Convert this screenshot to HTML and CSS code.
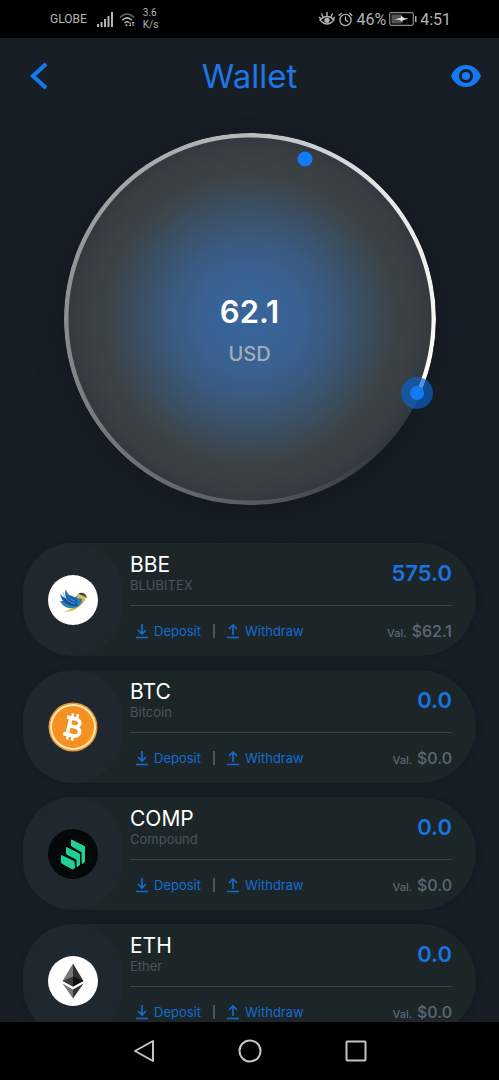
FILE: index.html
```html
<!DOCTYPE html>
<html lang="en">
<head>
<meta charset="utf-8">
<meta name="viewport" content="width=device-width, initial-scale=1">
<title>Wallet</title>
<link rel="stylesheet" href="styles.css">
</head>
<body>
<svg class="defs" aria-hidden="true">
  <symbol id="deposit" viewBox="0 0 14 16"><path d="M7 1v10M3 7l4 4 4-4M1 14.500h12" fill="none" stroke="currentColor" stroke-width="1.600"/></symbol>
  <symbol id="withdraw" viewBox="0 0 14 16"><path d="M7 12V2M3 6l4-4 4 4M1 14.500h12" fill="none" stroke="currentColor" stroke-width="1.600"/></symbol>
</svg>

<div class="status">
  <div class="status-group">
    <span class="carrier">GLOBE</span>
    <svg class="signal" viewBox="0 0 16 15" width="16" height="15" fill="#b4b4b4"><path d="M0 12h2v3H0zM3.500 10h2v5h-2zM7 7h2v8H7zM10.500 4h2v11h-2zM14 0h2v15h-2z"/></svg>
    <svg class="wifi" viewBox="0 0 16 15" width="16" height="15" fill="none" stroke="#b4b4b4" stroke-width="1.500"><path d="M1 5.500Q8-1.500 15 5.500" stroke="#666"/><path d="M3.200 8.300Q8 3.500 12.800 8.300M5.400 11Q8 8.500 10 10.700"/><circle cx="7.500" cy="13.300" r="1" fill="#b4b4b4" stroke="none"/><path d="M11.200 10v4m-1-1 1 1 1-1M14 14v-4m-1 1 1-1 1 1" stroke-width="1"/></svg>
    <span class="speed">3.6<br>K/s</span>
  </div>
  <div class="status-group status-right">
    <svg viewBox="0 0 16 14" width="16" height="14" fill="none" stroke="#b4b4b4" stroke-width="1.400"><path d="M1 8q7-7 14 0-7 8-14 0zM8 4V0M4 5 2.500 1.500M12 5l1.500-3.500M1.500 6.500 0 5M14.500 6.500 16 5"/><circle cx="8" cy="8.300" r="2.600" fill="#b4b4b4" stroke="none"/></svg>
    <svg class="alarm" viewBox="0 0 15 15" width="15" height="15" fill="none" stroke="#b4b4b4" stroke-width="1.300"><circle cx="7.500" cy="8" r="5.600"/><path d="M7.500 4.500V8.200l2.500 1.600M.7 3.800 3.700 1M14.300 3.800 11.300 1"/></svg>
    <span class="clock">46%</span>
    <svg class="battery" viewBox="0 0 28 14" width="28" height="14"><rect x=".7" y=".7" width="23.600" height="12.600" rx="1.500" fill="none" stroke="#8c8c8c" stroke-width="1.200"/><path d="M2.500 2.500h10v9h-10z" fill="#555"/><path d="M6 7.500 12 5.500v-2l3 2.500 4.500.5-6 2v2L11 8z" fill="#ddd"/><path d="M26 4h1.500v6H26z" fill="#aaa"/></svg>
    <span class="clock">4:51</span>
  </div>
</div>

<header class="header">
  <button class="icon-button" aria-label="Back"><svg viewBox="0 0 18 28" width="18" height="28"><path d="M16 2 3 14l13 12" fill="none" stroke="currentColor" stroke-width="4"/></svg></button>
  <h1 class="title">Wallet</h1>
  <button class="icon-button" aria-label="Show balance"><svg viewBox="0 0 30 22" width="30" height="22"><path d="M15 0C8 0 2.500 4.500 0 11c2.500 6.500 8 11 15 11s12.500-4.500 15-11C27.500 4.500 22 0 15 0z" fill="currentColor"/><circle cx="15" cy="11" r="5.600" fill="none" stroke="#171e26" stroke-width="3"/></svg></button>
</header>

<main class="content">
  <section class="balance">
    <div class="ring"></div>
    <span class="dot"></span>
    <span class="knob"></span>
    <strong class="total">62.1</strong>
    <span class="currency">USD</span>
  </section>

  <ul class="coins">
    <li class="coin">
      <div class="badge"><svg class="logo" viewBox="0 0 50 50"><circle cx="25" cy="25" r="25" fill="#fff"/><path d="M16 37c7 0 14-3 18-8 3-3 4-5 3-9l-5 1c0 8-7 13-16 16z" fill="#d6b944"/><path d="M12 26c3 6 8 8 14 7 6-1 9-5 8-12l-4-1c-3 3-10 6-18 6z" fill="#2a83ab"/><path d="M12 19c2 9 9 13 18 12-2-5-6-6-10-7-4-1-6-3-8-5z" fill="#1c4f9c"/><path d="M18 14c-3 8 2 14 11 15 2-4 0-6-3-7-5-2-7-3-8-8z" fill="#1b5fae"/><path d="M15 17c1 6 5 10 12 12M19 18c0 4 4 7 8 8" fill="none" stroke="#57a5c4" stroke-width=".7"/><path d="M29 23c0-4 4-6 7-4l3 4-4 1z" fill="#d9bd62"/><path d="M30 19c3-2.500 8-1.500 9 4-2-2-5-3-9-4z" fill="#4e3a2c"/></svg></div>
      <div class="details">
        <div class="summary"><div><h2 class="symbol">BBE</h2><p class="name">BLUBITEX</p></div><span class="amount">575.0</span></div>
        <div class="actions"><button class="action"><svg class="arrow"><use href="#deposit"/></svg>Deposit</button><span class="divider"></span><button class="action"><svg class="arrow"><use href="#withdraw"/></svg>Withdraw</button><span class="value"><small class="value-label">Val.</small>$62.1</span></div>
      </div>
    </li>
    <li class="coin">
      <div class="badge"><svg class="logo" viewBox="0 0 50 50"><circle cx="25" cy="25" r="24.500" fill="#e9923a"/><circle cx="25" cy="25" r="22" fill="#f39222" stroke="#ffe5ae" stroke-width="2"/><g transform="rotate(13 25 25)" fill="none" stroke="#fff"><path d="M17 16.500h9c6.500 0 6.500 8 0 8h-5.500 6.500c7.500 0 7.500 9 0 9H17M21 16v18" stroke-width="3.600"/><path d="M22 11.500V17M27 11.500V17M22 33v5.500M27 33v5.500" stroke-width="2.600"/></g></svg></div>
      <div class="details">
        <div class="summary"><div><h2 class="symbol">BTC</h2><p class="name">Bitcoin</p></div><span class="amount">0.0</span></div>
        <div class="actions"><button class="action"><svg class="arrow"><use href="#deposit"/></svg>Deposit</button><span class="divider"></span><button class="action"><svg class="arrow"><use href="#withdraw"/></svg>Withdraw</button><span class="value"><small class="value-label">Val.</small>$0.0</span></div>
      </div>
    </li>
    <li class="coin">
      <div class="badge"><svg class="logo" viewBox="0 0 50 50"><circle cx="25" cy="25" r="25" fill="#050809"/><g fill="#1fd195" stroke="#1fd195" stroke-linejoin="round"><path d="M23.500 11 36.500 17.500V33L34 34.500V23L23.500 17z"/><path d="M18.500 18.500 31.500 25V36L29 37.500V30.500L18.500 25z"/><path d="M13.500 26.500 26 32.500 26.500 39 24.500 40 13.500 34z"/></g></svg></div>
      <div class="details">
        <div class="summary"><div><h2 class="symbol">COMP</h2><p class="name">Compound</p></div><span class="amount">0.0</span></div>
        <div class="actions"><button class="action"><svg class="arrow"><use href="#deposit"/></svg>Deposit</button><span class="divider"></span><button class="action"><svg class="arrow"><use href="#withdraw"/></svg>Withdraw</button><span class="value"><small class="value-label">Val.</small>$0.0</span></div>
      </div>
    </li>
    <li class="coin">
      <div class="badge"><svg class="logo" viewBox="0 0 50 50"><circle cx="25" cy="25" r="25" fill="#fff"/><path d="M25 7.500v21.800L14.500 25z" fill="#777"/><path d="M25 7.500v21.800L35.500 25z" fill="#303030"/><path d="M25 20.500v10.300L14.500 25z" fill="#3c3c3c"/><path d="M25 20.500v10.300L35.500 25z" fill="#111"/><path d="M14.500 27.500 25 33.500v9z" fill="#777"/><path d="M35.500 27.500 25 33.500v9z" fill="#333"/></svg></div>
      <div class="details">
        <div class="summary"><div><h2 class="symbol">ETH</h2><p class="name">Ether</p></div><span class="amount">0.0</span></div>
        <div class="actions"><button class="action"><svg class="arrow"><use href="#deposit"/></svg>Deposit</button><span class="divider"></span><button class="action"><svg class="arrow"><use href="#withdraw"/></svg>Withdraw</button><span class="value"><small class="value-label">Val.</small>$0.0</span></div>
      </div>
    </li>
  </ul>
</main>

<nav class="navbar">
  <button class="nav-button" aria-label="Back"><svg viewBox="0 0 24 24" width="24" height="24"><path d="M21 2v20L3 12z"/></svg></button>
  <button class="nav-button" aria-label="Home"><svg viewBox="0 0 24 24" width="24" height="24"><circle cx="12" cy="12" r="10.500"/></svg></button>
  <button class="nav-button" aria-label="Recent apps"><svg viewBox="0 0 24 24" width="24" height="24"><rect x="2.500" y="2.500" width="19" height="19" rx="1"/></svg></button>
</nav>
</body>
</html>
```
FILE: styles.css
```css
* {
  box-sizing: border-box;
}

body {
  margin: 0;
  height: 100vh;
  display: flex;
  flex-direction: column;
  overflow: hidden;
  background: #171e26;
  color: #fff;
  font-family: Inter, "Liberation Sans", sans-serif;
}

h1, h2, p, ul {
  margin: 0;
  padding: 0;
  font-weight: 400;
}

button {
  display: flex;
  align-items: center;
  margin: 0;
  padding: 0;
  border: 0;
  background: none;
  color: #147af3;
  font: inherit;
}

.defs {
  position: absolute;
  width: 0;
  height: 0;
}

.status {
  display: flex;
  justify-content: space-between;
  flex: none;
  height: 38px;
  padding: 0 48px 0 50px;
  background: #000;
  color: #b4b4b4;
  font-family: Roboto, sans-serif;
}

.status-group {
  display: flex;
  align-items: center;
  gap: 4px;
}

.status-right {
  gap: 3px;
}

.carrier {
  margin-right: 6px;
  font-size: 12px;
}

.wifi {
  margin-left: 2px;
}

.speed {
  margin-left: 4px;
  font-size: 10px;
  line-height: 12px;
}

.clock {
  font-size: 16px;
}

.header {
  display: flex;
  align-items: center;
  justify-content: space-between;
  flex: none;
  height: 76px;
  padding: 0 18px 0 30px;
}

.title {
  color: #1f76e4;
  font-size: 33px;
  font-weight: 400;
  line-height: 40px;
}

.content {
  flex: 1;
  min-height: 0;
  overflow: hidden;
  padding: 19px 23px 0;
}

.balance {
  position: relative;
  display: flex;
  flex-direction: column;
  align-items: center;
  justify-content: center;
  width: 372px;
  max-width: 100%;
  aspect-ratio: 1;
  margin: 0 auto 38px;
  padding-top: 28px;
  border-radius: 50%;
  background:
    radial-gradient(circle closest-side, #38659c 0%, #396293 25%, #3a5a80 42%, #3b4f63 60%, #3c464d 73%, #3b4144 82%, #373d42 92%, #31383e 100%);
  box-shadow: 0 4px 28px #12171f;
}

.ring {
  position: absolute;
  inset: 0;
  border-radius: 50%;
  background: conic-gradient(from 114deg, #171e2600 0deg, #3d434800 20deg, #4f5458 55deg, #5d6165 75deg, #85888b 145deg, #b7b9ba 245deg, #e3e4e5 290deg, #fff 360deg);
  mask: radial-gradient(closest-side, transparent calc(100% - 5px), #000 calc(100% - 4px));
}

.dot,
.knob {
  position: absolute;
  border-radius: 50%;
  background: #147af3;
  transform: translate(-50%, -50%);
}

.dot {
  left: 65%;
  top: 7%;
  width: 15px;
  height: 15px;
}

.knob {
  left: 95%;
  top: 70%;
  width: 14px;
  height: 14px;
  box-shadow: 0 0 0 9px #0b61c9b0;
}

.total {
  font-size: 31px;
  font-weight: 600;
  line-height: 42px;
}

.currency {
  color: #a5adb8;
  font-size: 20px;
  font-weight: 500;
  line-height: 42px;
}

.coins {
  display: flex;
  flex-direction: column;
  gap: 14px;
  list-style: none;
}

.coin {
  display: flex;
  height: 113px;
  border-radius: 57px;
  background: #1c2628;
  box-shadow: 0 0 6px #131920;
}

.badge {
  display: flex;
  align-items: center;
  justify-content: center;
  flex: none;
  width: 100px;
  border-radius: 50px;
  background: #1f282f;
}

.logo {
  width: 50px;
  height: 50px;
}

.details {
  flex: 1;
  padding: 0 24px 0 7px;
}

.summary {
  display: flex;
  justify-content: space-between;
  height: 63px;
  padding-top: 10px;
  border-bottom: 1px solid #3a444a;
}

.symbol {
  font-size: 21px;
  line-height: 24px;
}

.name {
  color: #4c5361;
  font-size: 13px;
  line-height: 16px;
}

.amount {
  color: #1a73e2;
  font-size: 22px;
  font-weight: 600;
  line-height: 40px;
}

.actions {
  display: flex;
  align-items: center;
  height: 50px;
  padding-left: 5px;
}

.action {
  gap: 5px;
  font-size: 13px;
  font-weight: 400;
}

.action {
  color: #166bd2;
}

.arrow {
  width: 14px;
  height: 16px;
}

.divider {
  width: 2px;
  height: 14px;
  margin: 0 11px 0 12px;
  background: #4c5663;
}

.value {
  margin-left: auto;
  color: #5d6675;
  font-size: 16px;
  font-weight: 500;
}

.value-label {
  margin-right: 5px;
  font-size: 11px;
}

.navbar {
  display: flex;
  align-items: center;
  justify-content: center;
  gap: 82px;
  flex: none;
  height: 58px;
  background: #000;
}

.nav-button svg {
  fill: none;
  stroke: #c4c4c4;
  stroke-width: 2;
  stroke-linejoin: round;
}
```
